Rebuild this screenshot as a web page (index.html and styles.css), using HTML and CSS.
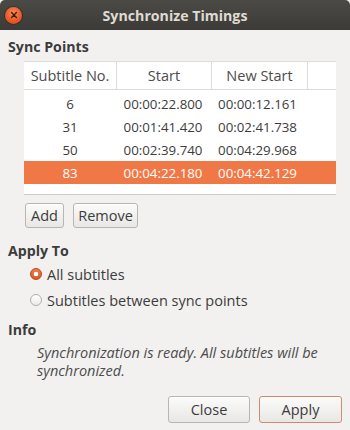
FILE: index.html
```html
<!DOCTYPE html>
<html>
<head>
<meta charset="utf-8">
<link rel="stylesheet" href="styles.css">
</head>
<body>
<div class="window">
  <div class="titlebar">
    <span class="close-btn">
      <svg width="16" height="16" viewBox="0 0 16 16"><path d="M5.6 5.6 L10.4 10.4 M10.4 5.6 L5.6 10.4" stroke="#4a1a0a" stroke-width="1.4" stroke-linecap="round"/></svg>
    </span>
    <span class="title">Synchronize Timings</span>
  </div>
  <div class="content">
    <div class="heading">Sync Points</div>
    <div class="table">
      <div class="thead">
        <div class="th c1">Subtitle No.</div>
        <div class="th c2">Start</div>
        <div class="th c3">New Start</div>
        <div class="th c4"></div>
      </div>
      <div class="tbody">
        <div class="tr"><span class="c1">6</span><span class="c2">00:00:22.800</span><span class="c3">00:00:12.161</span></div>
        <div class="tr"><span class="c1">31</span><span class="c2">00:01:41.420</span><span class="c3">00:02:41.738</span></div>
        <div class="tr"><span class="c1">50</span><span class="c2">00:02:39.740</span><span class="c3">00:04:29.968</span></div>
        <div class="tr selected"><span class="c1">83</span><span class="c2">00:04:22.180</span><span class="c3">00:04:42.129</span></div>
      </div>
    </div>
    <div class="table-buttons">
      <button class="btn btn-add">Add</button>
      <button class="btn btn-remove">Remove</button>
    </div>
    <div class="heading heading-apply">Apply To</div>
    <div class="radios">
      <div class="radio-row"><span class="radio checked"></span><span>All subtitles</span></div>
      <div class="radio-row"><span class="radio"></span><span>Subtitles between sync points</span></div>
    </div>
    <div class="heading heading-info">Info</div>
    <div class="info">Synchronization is ready. All subtitles will be synchronized.</div>
    <div class="actions">
      <button class="btn btn-close">Close</button>
      <button class="btn btn-apply">Apply</button>
    </div>
  </div>
</div>
</body>
</html>
```
FILE: styles.css
```css
html, body {
  margin: 0;
  padding: 0;
  background: #f2f1f0;
}
.window {
  width: 350px;
  height: 430px;
  background: #f2f1f0;
  font-family: "Open Sans", "Noto Sans", sans-serif;
  font-size: 14.5px;
  color: #3c3c3c;
  overflow: hidden;
}
.titlebar {
  height: 30px;
  background: linear-gradient(#4b4a45, #3c3b37);
  border-radius: 5px 5px 0 0;
  display: flex;
  align-items: center;
  position: relative;
}
.close-btn {
  width: 17px;
  height: 17px;
  border-radius: 50%;
  background: radial-gradient(circle at 50% 35%, #f58a5d, #e5501f 70%, #c8431a);
  margin-left: 5px;
  display: flex;
  align-items: center;
  justify-content: center;
  box-shadow: 0 0 0 1px rgba(0,0,0,0.25);
}
.close-btn svg { display: block; }
.title {
  position: absolute;
  left: 0;
  right: 0;
  text-align: center;
  font-weight: bold;
  font-size: 14.2px;
  color: #dfdbd2;
  pointer-events: none;
}
.content {
  padding: 8px 8px 8px 8px;
  display: flex;
  flex-direction: column;
}
.heading {
  font-weight: bold;
  font-size: 14.2px;
  line-height: 18px;
  height: 18px;
}
.table {
  margin: 5px 6px 0 16px;
  background: #fff;
  border-top: 1px solid #dedcda;
  border-bottom: 1px solid #cdcac7;
}
.thead {
  display: flex;
  height: 27px;
  border-bottom: 1px solid #dedcda;
}
.th {
  display: flex;
  align-items: center;
  justify-content: center;
  color: #4c4c4c;
  border-right: 1px solid #dedcda;
}
.th.c4 { border-right: none; }
.c1 { width: 92px; }
.c2 { width: 94px; }
.c3 { width: 95px; }
.c4 { flex: 1; }
.tbody {
  padding: 2px 0 10px 0;
  font-size: 13.3px;
}
.tr {
  display: flex;
  height: 23px;
  align-items: center;
  color: #3c3c3c;
}
.tr span {
  text-align: center;
}
.tr.selected {
  background: #f07746;
  color: #fff;
}
.table-buttons {
  display: flex;
  gap: 9px;
  margin: 8px 0 0 17px;
}
.btn {
  font-family: inherit;
  font-size: 14.5px;
  color: #3c3c3c;
  height: 25px;
  padding: 0 4px;
  border: 1px solid #b9b6b1;
  border-radius: 3px;
  background: linear-gradient(#fbfbfa, #e8e7e5);
  box-shadow: inset 0 1px 0 #fff;
}
.btn-add { width: 39px; }
.btn-remove { width: 65px; }
.heading-apply { margin-top: 14px; }
.radios {
  margin-top: 1px;
  display: flex;
  flex-direction: column;
}
.radio-row {
  height: 26px;
  display: flex;
  align-items: center;
  padding-left: 22px;
  gap: 5px;
}
.radio {
  width: 12px;
  height: 12px;
  border-radius: 50%;
  border: 1px solid #b2aea9;
  background: linear-gradient(#ffffff, #ecebe9);
  box-sizing: border-box;
}
.radio.checked {
  border: 1px solid #b54a1f;
  background: radial-gradient(circle, #ffffff 0 2px, transparent 2.6px), linear-gradient(#f27a47, #d85b27);
}
.heading-info { margin-top: 8px; }
.info {
  margin: 5px 8px 0 29px;
  font-style: italic;
  line-height: 18px;
  color: #4c4c4c;
}
.actions {
  display: flex;
  justify-content: flex-end;
  gap: 9px;
  margin-top: 16px;
  padding-right: 0;
}
.btn-close { width: 82px; height: 27px; }
.btn-apply { width: 83px; height: 27px; border-color: #d08a6f; }
```
